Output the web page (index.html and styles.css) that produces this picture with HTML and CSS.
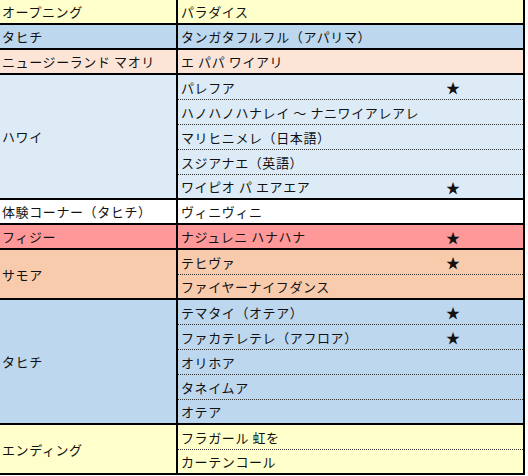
FILE: index.html
```html
<!DOCTYPE html>
<html lang="ja">
<head>
<meta charset="utf-8">
<link rel="stylesheet" href="styles.css">
</head>
<body>
<div class="prog">
  <div class="group yellow n1">
    <div class="sec">オープニング</div>
    <div class="items">
      <div class="item"><span class="name">パラダイス</span><span class="star"></span></div>
    </div>
  </div>
  <div class="group blue n1">
    <div class="sec">タヒチ</div>
    <div class="items">
      <div class="item"><span class="name">タンガタフルフル（アパリマ）</span><span class="star"></span></div>
    </div>
  </div>
  <div class="group pink n1">
    <div class="sec">ニュージーランド マオリ</div>
    <div class="items">
      <div class="item"><span class="name">エ パパ ワイアリ</span><span class="star"></span></div>
    </div>
  </div>
  <div class="group light n5">
    <div class="sec">ハワイ</div>
    <div class="items">
      <div class="item"><span class="name">パレフア</span><span class="star">★</span></div>
      <div class="item"><span class="name">ハノハノハナレイ 〜 ナニワイアレアレ</span><span class="star"></span></div>
      <div class="item"><span class="name">マリヒニメレ（日本語）</span><span class="star"></span></div>
      <div class="item"><span class="name">スジアナエ（英語）</span><span class="star"></span></div>
      <div class="item"><span class="name">ワイピオ パ エアエア</span><span class="star">★</span></div>
    </div>
  </div>
  <div class="group white n1">
    <div class="sec">体験コーナー（タヒチ）</div>
    <div class="items">
      <div class="item"><span class="name">ヴィニヴィニ</span><span class="star"></span></div>
    </div>
  </div>
  <div class="group red n1">
    <div class="sec">フィジー</div>
    <div class="items">
      <div class="item"><span class="name">ナジュレニ ハナハナ</span><span class="star">★</span></div>
    </div>
  </div>
  <div class="group peach n2">
    <div class="sec">サモア</div>
    <div class="items">
      <div class="item"><span class="name">テヒヴァ</span><span class="star">★</span></div>
      <div class="item"><span class="name">ファイヤーナイフダンス</span><span class="star"></span></div>
    </div>
  </div>
  <div class="group blue n5">
    <div class="sec">タヒチ</div>
    <div class="items">
      <div class="item"><span class="name">テマタイ（オテア）</span><span class="star">★</span></div>
      <div class="item"><span class="name">ファカテレテレ（アフロア）</span><span class="star">★</span></div>
      <div class="item"><span class="name">オリホア</span><span class="star"></span></div>
      <div class="item"><span class="name">タネイムア</span><span class="star"></span></div>
      <div class="item"><span class="name">オテア</span><span class="star"></span></div>
    </div>
  </div>
  <div class="group yellow n2">
    <div class="sec">エンディング</div>
    <div class="items">
      <div class="item"><span class="name">フラガール 虹を</span><span class="star"></span></div>
      <div class="item"><span class="name">カーテンコール</span><span class="star"></span></div>
    </div>
  </div>
</div>
</body>
</html>
```

FILE: styles.css
```css
html, body {
  margin: 0;
  padding: 0;
  background: #ffffff;
}

.prog {
  width: 525px;
  display: flex;
  flex-direction: column;
  font-family: "Noto Sans CJK JP", sans-serif;
  font-size: 13px;
  letter-spacing: 0.6px;
  color: #111;
}

.group {
  display: grid;
  grid-template-columns: 178px 1fr;
  box-sizing: border-box;
  border-bottom: 2px solid #000;
  border-right: 2px solid #000;
}

.n1 { height: 25px; }
.n2 { height: 50px; }
.n5 { height: 125px; }

.sec {
  display: flex;
  align-items: center;
  padding-left: 2px;
  border-right: 2px solid #000;
  white-space: nowrap;
}

.items {
  display: flex;
  flex-direction: column;
}

.item {
  box-sizing: border-box;
  height: 25px;
  display: flex;
  align-items: center;
  padding-left: 3px;
  border-bottom: 1px dotted #333;
  white-space: nowrap;
}

.item:last-child {
  flex: 1;
  height: auto;
  border-bottom: none;
}

.name {
  width: 265px;
}

.star {
  font-size: 14px;
  letter-spacing: 0;
}

.yellow { background: #ffffcc; }
.blue { background: #bdd7ee; }
.pink { background: #fce4d6; }
.light { background: #ddebf7; }
.white { background: #ffffff; }
.red { background: #ff9999; }
.peach { background: #f8cbad; }
```
